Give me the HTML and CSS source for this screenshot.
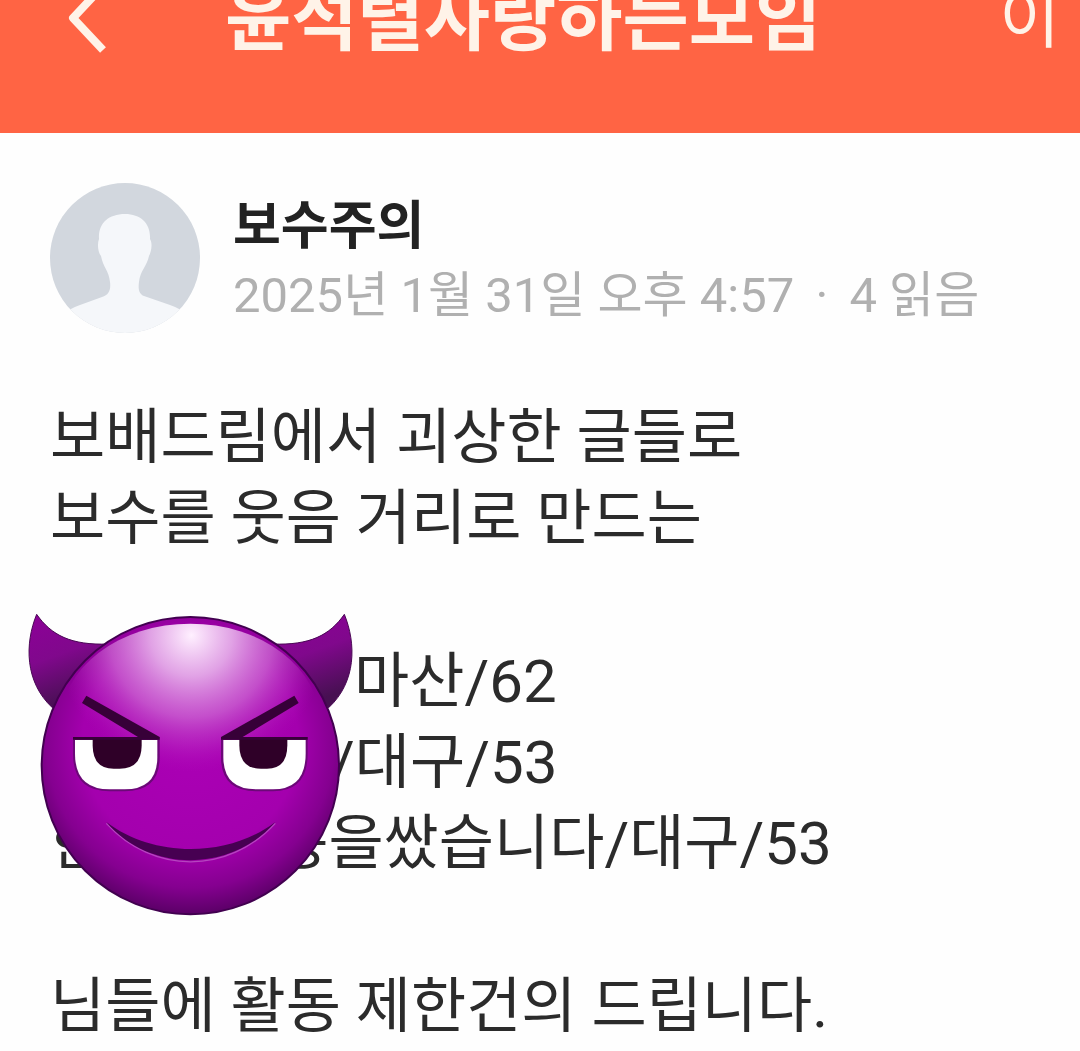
FILE: index.html
```html
<!DOCTYPE html>
<html lang="ko">
<head>
    <meta charset="UTF-8">
    <meta name="viewport" content="width=device-width, initial-scale=1.0">
    <title>윤석렬사랑하는모임</title>
    <link rel="stylesheet" href="styles.css">
</head>
<body>
    <header class="topbar">
        <button class="back" type="button" aria-label="뒤로">
            <svg viewBox="0 0 40 72" width="40" height="72">
                <path d="M35 2 L5 34 L35 66" fill="none" stroke="#fff3e8" stroke-width="8" stroke-linecap="butt" stroke-linejoin="round"/>
            </svg>
        </button>
        <h1 class="title">윤석렬사랑하는모임</h1>
        <span class="side">이</span>
    </header>

    <main class="post">
        <div class="author">
            <svg class="avatar" viewBox="0 0 150 150">
                <defs>
                    <clipPath id="avatarClip"><circle cx="75" cy="75" r="75"/></clipPath>
                </defs>
                <g clip-path="url(#avatarClip)">
                    <rect width="150" height="150" fill="#d2d7de"/>
                    <path d="M75 31 C91 31 101 41 100 56 C103 61 101 69 99 73 C97 83 90 88 89 99 C88 106 89 111 94 113 L120 122 Q132 126 140 134 V150 H10 V134 Q18 126 30 122 L52 114 C59 112 61 107 60 99 C59 88 53 84 51 73 C48 69 47 61 49 56 C48 41 58 31 75 31 Z" fill="#f5f7fa"/>
                </g>
            </svg>
            <div class="info">
                <div class="name">보수주의</div>
                <div class="meta">2025년 1월 31일 오후 4:57 <span class="dot">·</span> 4 읽음</div>
            </div>
        </div>

        <div class="content">
            <p>보배드림에서 괴상한 글들로<br>보수를 웃음 거리로 만드는</p>
            <div class="list">
                <p><span class="gap wide"></span>마산/62</p>
                <p><span class="gap"></span>/대구/53</p>
                <p>한<span class="gap short"></span>똥을쌌습니다/대구/53</p>
                <!-- Devil sticker over the names -->
                <svg class="sticker" viewBox="25 35 975 915">
                    <defs>
                        <radialGradient id="face" gradientUnits="userSpaceOnUse" cx="512" cy="430" r="540">
                            <stop offset="0" stop-color="#ab00b5"/>
                            <stop offset="0.6" stop-color="#a400ae"/>
                            <stop offset="0.8" stop-color="#850090"/>
                            <stop offset="1" stop-color="#4c0058"/>
                        </radialGradient>
                        <radialGradient id="shine" gradientUnits="userSpaceOnUse" cx="515" cy="105" r="410">
                            <stop offset="0" stop-color="#fff0ff"/>
                            <stop offset="0.3" stop-color="#e6b0ea" stop-opacity="0.92"/>
                            <stop offset="0.6" stop-color="#d070d6" stop-opacity="0.7"/>
                            <stop offset="0.8" stop-color="#c040c8" stop-opacity="0.4"/>
                            <stop offset="1" stop-color="#b010ba" stop-opacity="0"/>
                        </radialGradient>
                        <linearGradient id="horn" x1="0" y1="0" x2="0.3" y2="1">
                            <stop offset="0" stop-color="#8d0098"/>
                            <stop offset="0.5" stop-color="#80088c"/>
                            <stop offset="1" stop-color="#471052"/>
                        </linearGradient>
                    </defs>
                    <path d="M51 42 C95 105 155 135 265 131 L98 322 C15 245 15 130 51 42 Z" fill="url(#horn)" stroke="#4b0856" stroke-width="3"/>
                    <path d="M974 42 C930 105 870 135 760 131 L927 322 C1010 245 1010 130 974 42 Z" fill="url(#horn)" stroke="#4b0856" stroke-width="3"/>
                    <circle cx="512" cy="496" r="446" fill="url(#face)" stroke="#420050" stroke-width="6"/>
                    <ellipse cx="512" cy="370" rx="390" ry="300" fill="url(#shine)"/>
                    <path d="M160 410 H420 V470 Q420 573 315 573 H270 Q160 573 160 460 Z" fill="#6c0878"/>
                    <path d="M166 419 H413 V470 Q413 567 315 567 H270 Q166 567 166 460 Z" fill="#fff"/>
                    <path d="M219 415 H366 V435 Q366 505 300 505 H282 Q219 505 219 435 Z" fill="#2f0028"/>
                    <path d="M604 410 H864 V460 Q864 573 760 573 H710 Q604 573 604 470 Z" fill="#6c0878"/>
                    <path d="M611 419 H858 V460 Q858 567 760 567 H710 Q611 567 611 470 Z" fill="#fff"/>
                    <path d="M659 415 H803 V435 Q803 505 742 505 H724 Q659 505 659 435 Z" fill="#2f0028"/>
                    <path d="M200 286 L420 410 V418 H160 V410 H355 L187 308 Z" fill="#370038"/>
                    <path d="M824 286 L604 410 V418 H864 V410 H669 L837 308 Z" fill="#370038"/>
                    <path d="M260 665 C400 819 625 819 767 665" fill="none" stroke="#b545bf" stroke-width="4" transform="translate(0 4)"/>
                    <path d="M260 665 C400 773 625 773 767 665 C635 818 390 818 260 665 Z" fill="#470052"/>
                </svg>
            </div>
            <p>님들에 활동 제한건의 드립니다.</p>
        </div>
    </main>
</body>
</html>
```
FILE: styles.css
```css
* {
    box-sizing: border-box;
}
body {
    margin: 0;
    background-color: #fefefe;
    color: #2b2b2b;
    font-family: Roboto, "Noto Sans CJK KR", sans-serif;
    overflow: hidden;
}
.topbar {
    display: flex;
    align-items: center;
    padding: 0 20px 93px 68px;
    background-color: #ff6444;
    color: #fff3e8;
    line-height: 40px;
}
.back {
    display: flex;
    align-items: center;
    width: 157px;
    height: 40px;
    padding: 0;
    border: none;
    background: none;
    cursor: pointer;
}
.back svg {
    flex: none;
}
.title {
    flex: 1;
    margin: 0;
    font-size: 72px;
    font-weight: bold;
    white-space: nowrap;
}
.side {
    font-size: 66px;
    line-height: 30px;
}
.post {
    padding: 50px;
}
.author {
    display: flex;
    gap: 33px;
}
.avatar {
    flex: none;
    width: 150px;
    height: 150px;
}
.info {
    padding-top: 9px;
    white-space: nowrap;
}
.name {
    font-size: 52px;
    font-weight: bold;
    line-height: 70px;
    color: #222;
}
.meta {
    font-size: 49px;
    line-height: 68px;
    color: #b0b0b0;
}
.dot {
    margin: 0 9px;
}
/* Post text */
.content {
    margin-top: 64px;
    font-size: 60px;
    line-height: 81px;
}
.content p {
    margin: 0;
}
.list {
    position: relative;
    margin: 82px 0;
}
.gap {
    display: inline-block;
    width: 280px;
}
.gap.wide {
    width: 304px;
}
.gap.short {
    width: 168px;
}
.sticker {
    position: absolute;
    left: -22px;
    top: -29px;
    width: 325px;
    height: 305px;
}
```
